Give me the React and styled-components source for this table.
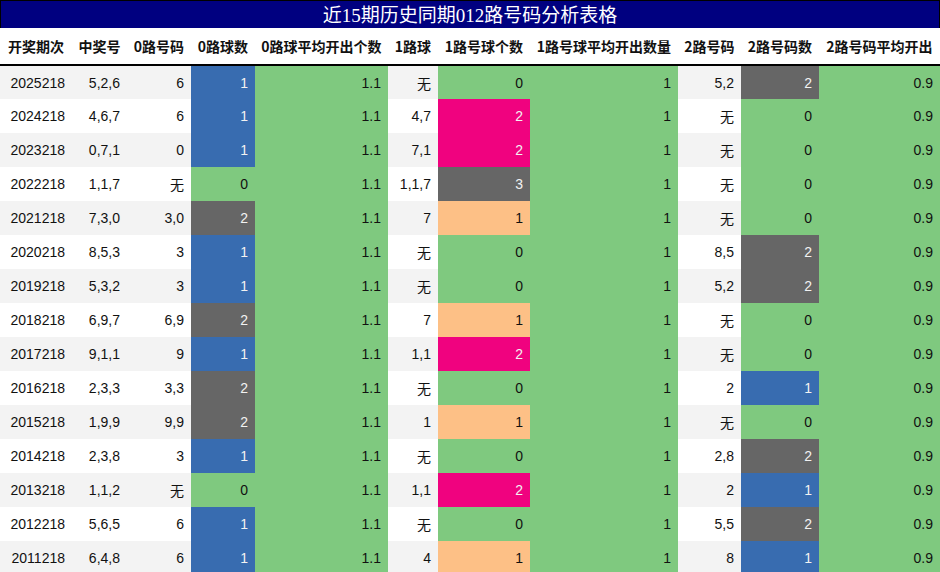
import React from "react";
import styled, { createGlobalStyle } from "styled-components";

const GlobalStyle = createGlobalStyle`
    body {
        margin: 0;
        background: #ffffff;
        font-family: "Liberation Sans", "Noto Sans CJK SC", sans-serif;
    }
`

const COLORS = {
    green: "#7fc97f",
    blue: "#386cb0",
    grey: "#666666",
    pink: "#f0027f",
    orange: "#fdc086",
}

const DARK = ["blue", "grey", "pink"]

const Wrapper = styled.div`
    width: 940px;
`

const Title = styled.div`
    height: 27px;
    background: #000080;
    border: 1px solid #000;
    border-bottom: none;
    color: #ffffff;
    font-family: "Liberation Serif", "Noto Sans CJK SC", serif;
    font-size: 19px;
    line-height: 29px;
    text-align: center;
`

const Table = styled.table`
    width: 940px;
    border-collapse: collapse;
    table-layout: fixed;
`

const HeadCell = styled.th`
    height: 36px;
    padding: 0;
    font-family: "Noto Sans CJK SC", sans-serif;
    font-size: 14px;
    font-weight: 700;
    color: #111;
    text-align: center;
    white-space: nowrap;
    border-bottom: 2px solid #000;
`

const Row = styled.tr`
    height: 34px;
    background: ${({ $odd }) => ($odd ? "#f3f3f3" : "#ffffff")};
`

const Cell = styled.td`
    padding: 0 7px 0 0;
    font-size: 14px;
    text-align: right;
    white-space: nowrap;
    color: ${({ $tone }) => (DARK.includes($tone) ? "#f2f2f2" : "#111")};
    background: ${({ $tone }) => ($tone ? COLORS[$tone] : "transparent")};
`

const columns = [
    { title: "开奖期次", width: 72 },
    { title: "中奖号", width: 55 },
    { title: "0路号码", width: 64 },
    { title: "0路球数", width: 64 },
    { title: "0路球平均开出个数", width: 133 },
    { title: "1路球", width: 50 },
    { title: "1路号球个数", width: 92 },
    { title: "1路号球平均开出数量", width: 148 },
    { title: "2路号码", width: 63 },
    { title: "2路号码数", width: 78 },
    { title: "2路号码平均开出", width: 121 },
]

const rows = [
    ["2025218", "5,2,6", "6", 1, "无", 0, "5,2", 2],
    ["2024218", "4,6,7", "6", 1, "4,7", 2, "无", 0],
    ["2023218", "0,7,1", "0", 1, "7,1", 2, "无", 0],
    ["2022218", "1,1,7", "无", 0, "1,1,7", 3, "无", 0],
    ["2021218", "7,3,0", "3,0", 2, "7", 1, "无", 0],
    ["2020218", "8,5,3", "3", 1, "无", 0, "8,5", 2],
    ["2019218", "5,3,2", "3", 1, "无", 0, "5,2", 2],
    ["2018218", "6,9,7", "6,9", 2, "7", 1, "无", 0],
    ["2017218", "9,1,1", "9", 1, "1,1", 2, "无", 0],
    ["2016218", "2,3,3", "3,3", 2, "无", 0, "2", 1],
    ["2015218", "1,9,9", "9,9", 2, "1", 1, "无", 0],
    ["2014218", "2,3,8", "3", 1, "无", 0, "2,8", 2],
    ["2013218", "1,1,2", "无", 0, "1,1", 2, "2", 1],
    ["2012218", "5,6,5", "6", 1, "无", 0, "5,5", 2],
    ["2011218", "6,4,8", "6", 1, "4", 1, "8", 1],
]

// 0路 / 2路 count tones
const countTone = (n) => ["green", "blue", "grey"][n]
// 1路 count tones
const oneTone = (n) => ["green", "orange", "pink", "grey"][n]

const App = () => {
    return (
        <>
            <GlobalStyle />
            <Wrapper>
                <Title>近15期历史同期012路号码分析表格</Title>
                <Table>
                    <colgroup>
                        {columns.map((c) => (
                            <col key={c.title} style={{ width: c.width }} />
                        ))}
                    </colgroup>
                    <thead>
                        <tr>
                            {columns.map((c) => (
                                <HeadCell key={c.title}>{c.title}</HeadCell>
                            ))}
                        </tr>
                    </thead>
                    <tbody>
                        {rows.map((r, i) => (
                            <Row key={r[0]} $odd={i % 2 === 0}>
                                <Cell>{r[0]}</Cell>
                                <Cell>{r[1]}</Cell>
                                <Cell>{r[2]}</Cell>
                                <Cell $tone={countTone(r[3])}>{r[3]}</Cell>
                                <Cell $tone="green">1.1</Cell>
                                <Cell>{r[4]}</Cell>
                                <Cell $tone={oneTone(r[5])}>{r[5]}</Cell>
                                <Cell $tone="green">1</Cell>
                                <Cell>{r[6]}</Cell>
                                <Cell $tone={countTone(r[7])}>{r[7]}</Cell>
                                <Cell $tone="green">0.9</Cell>
                            </Row>
                        ))}
                    </tbody>
                </Table>
            </Wrapper>
        </>
    )
}

export default App
